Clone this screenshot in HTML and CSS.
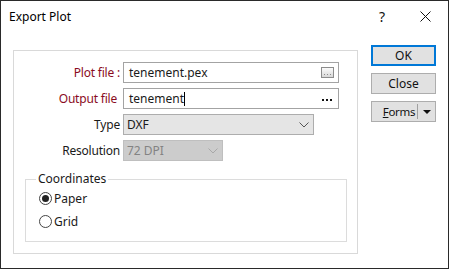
FILE: index.html
```html
<!DOCTYPE html>
<html lang="en">
<head>
  <meta charset="UTF-8" />
  <title>Export Plot</title>
  <link rel="stylesheet" href="styles.css">
</head>
<body>

  <div class="window">
    <div class="titlebar">
      <span class="title">Export Plot</span>
      <span class="help">?</span>
      <svg class="close-x" width="11" height="11" viewBox="0 0 11 11">
        <path d="M0.5 0.5 L10.5 10.5 M10.5 0.5 L0.5 10.5" stroke="#111" stroke-width="1" fill="none"/>
      </svg>
    </div>

    <div class="content">
      <div class="panel">
        <div class="row">
          <span class="lbl req">Plot file :</span>
          <div class="field">
            <span class="val">tenement.pex</span>
            <svg class="browse" width="13" height="11" viewBox="0 0 13 11">
              <defs>
                <linearGradient id="bg" x1="0" y1="0" x2="0" y2="1">
                  <stop offset="0" stop-color="#fdfdfd"/>
                  <stop offset="1" stop-color="#d6d6d6"/>
                </linearGradient>
              </defs>
              <rect x="0.5" y="0.5" width="12" height="10" fill="url(#bg)" stroke="#8c8c8c"/>
              <rect x="3" y="7" width="1" height="1" fill="#8c8c8c"/>
              <rect x="6" y="7" width="1" height="1" fill="#8c8c8c"/>
              <rect x="9" y="7" width="1" height="1" fill="#8c8c8c"/>
            </svg>
          </div>
        </div>

        <div class="row">
          <span class="lbl req out">Output file</span>
          <div class="field">
            <span class="val">tenement<span class="caret"></span></span>
            <svg class="dots" width="11" height="3" viewBox="0 0 11 3">
              <rect x="0" y="0" width="2" height="2" fill="#111"/>
              <rect x="4" y="0" width="2" height="2" fill="#111"/>
              <rect x="8" y="0" width="2" height="2" fill="#111"/>
            </svg>
          </div>
        </div>

        <div class="row">
          <span class="lbl">Type</span>
          <div class="combo type">
            <span class="val">DXF</span>
            <svg class="chev" width="10" height="6" viewBox="0 0 10 6">
              <path d="M0.5 0.5 L5 5 L9.5 0.5" stroke="#555" fill="none"/>
            </svg>
          </div>
        </div>

        <div class="row">
          <span class="lbl">Resolution</span>
          <div class="combo res disabled">
            <span class="val">72 DPI</span>
            <svg class="chev" width="10" height="6" viewBox="0 0 10 6">
              <path d="M0.5 0.5 L5 5 L9.5 0.5" stroke="#a8a8a8" fill="none"/>
            </svg>
          </div>
        </div>

        <fieldset class="group">
          <legend>Coordinates</legend>
          <div class="radio checked"><span class="circle"></span>Paper</div>
          <div class="radio"><span class="circle"></span>Grid</div>
        </fieldset>
      </div>

      <div class="buttons">
        <button class="btn default">OK</button>
        <button class="btn">Close</button>
        <button class="btn split"><span class="btn-label"><u>F</u>orms</span><span class="sep"></span><span class="tri"></span></button>
      </div>
    </div>
  </div>

</body>
</html>
```

FILE: styles.css
```css
* {
  margin: 0;
  padding: 0;
  box-sizing: border-box;
}

body {
  background-color: #fff;
  font-family: "Noto Sans", sans-serif;
  font-size: 12px;
  color: #1a1a1a;
}

.window {
  width: 449px;
  height: 269px;
  border: 1px solid #2a2a2a;
  background-color: #fff;
}

.titlebar {
  height: 30px;
  display: flex;
  align-items: center;
  padding-left: 8px;
}

.title {
  font-size: 12px;
  color: #000;
}

.help {
  margin-left: auto;
  font-size: 14px;
  color: #111;
}

.close-x {
  margin-left: 35px;
  margin-right: 17px;
}

.content {
  display: flex;
  padding: 14px 0 0 12px;
  gap: 13px;
}

.panel {
  width: 345px;
  height: 204px;
  margin-top: 5px;
  border: 1px solid #d9d9d9;
  padding-top: 11px;
}

.row {
  display: flex;
  align-items: center;
  height: 21px;
  margin-bottom: 5px;
}

.lbl {
  width: 106px;
  text-align: right;
  margin-right: 3px;
  color: #1a1a1a;
  white-space: nowrap;
  letter-spacing: -0.2px;
}

.lbl.req {
  color: #8a0b1e;
}

.lbl.out {
  padding-right: 3px;
}

.field {
  width: 216px;
  height: 21px;
  border: 1px solid #a3a3a3;
  display: flex;
  align-items: center;
  padding-left: 5px;
  padding-right: 4px;
}

.val {
  flex: 1;
  display: flex;
  align-items: center;
  white-space: nowrap;
}

.caret {
  display: inline-block;
  width: 1px;
  height: 14px;
  background-color: #000;
}

.dots {
  margin-right: 1px;
  margin-top: 3px;
}

.combo {
  height: 21px;
  border: 1px solid #adadad;
  background-color: #e5e5e5;
  display: flex;
  align-items: center;
  padding-left: 3px;
  padding-right: 4px;
}

.combo.type {
  width: 191px;
}

.combo.res {
  width: 100px;
}

.combo.disabled {
  background-color: #cccccc;
  border-color: #bfbfbf;
  color: #838383;
}

.group {
  margin: 10px 10px 0 11px;
  border: 1px solid #dcdcdc;
  padding: 0 0 8px 13px;
  height: 71px;
}

.group legend {
  padding: 0 2px;
  margin-left: -3px;
  line-height: 16px;
}

.radio {
  display: flex;
  align-items: center;
  height: 16px;
  margin-top: 3px;
  margin-bottom: 7px;
}

.radio .circle {
  width: 13px;
  height: 13px;
  border: 1px solid #444;
  border-radius: 50%;
  margin-right: 2px;
  display: flex;
  align-items: center;
  justify-content: center;
}

.radio.checked .circle::after {
  content: "";
  width: 7px;
  height: 7px;
  border-radius: 50%;
  background-color: #222;
}

.buttons {
  display: flex;
  flex-direction: column;
  gap: 7px;
}

.btn {
  width: 65px;
  height: 21px;
  border: 1px solid #adadad;
  background-color: #e1e1e1;
  font-family: "Noto Sans", sans-serif;
  font-size: 12px;
  color: #111;
  display: flex;
  align-items: center;
  justify-content: center;
}

.btn.default {
  border: 2px solid #0078d7;
}

.btn.split {
  justify-content: flex-start;
  padding-left: 9px;
}

.btn-label {
  width: 36px;
  white-space: nowrap;
  font-size: 11.5px;
  letter-spacing: -0.3px;
}

.btn-label u {
  text-decoration: underline;
}

.sep {
  width: 1px;
  height: 15px;
  background-color: #a0a0a0;
  flex-shrink: 0;
}

.tri {
  width: 0;
  height: 0;
  border-left: 4px solid transparent;
  border-right: 4px solid transparent;
  border-top: 4px solid #111;
  margin-left: 5px;
  flex-shrink: 0;
}
```
